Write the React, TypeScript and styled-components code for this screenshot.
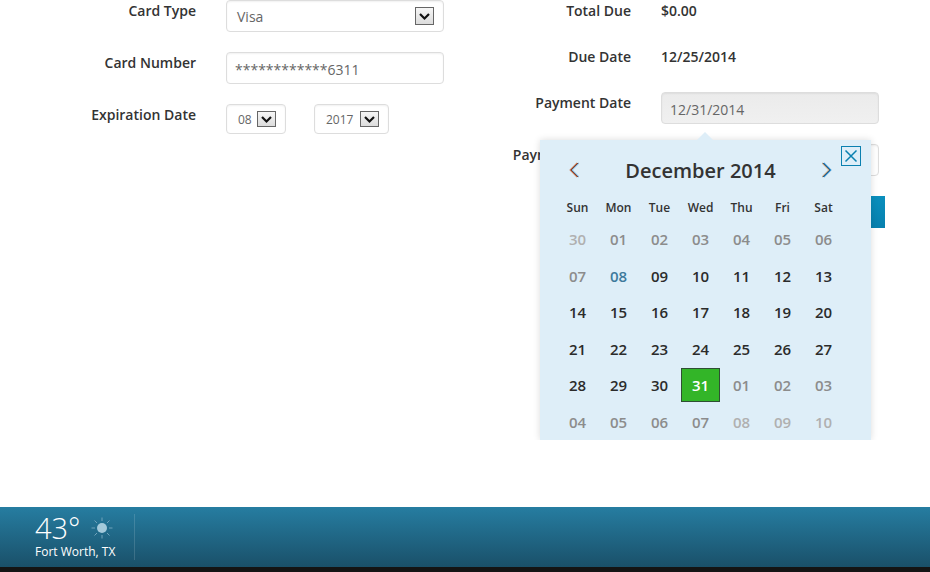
import { createGlobalStyle, styled } from "styled-components";

const GlobalStyle = createGlobalStyle`
    html, body {
        margin: 0;
        padding: 0;
        background: #fff;
        font-family: "Open Sans", "Liberation Sans", sans-serif;
    }
`;

const Page = styled.div`
    width: 930px;
    height: 572px;
    display: flex;
    flex-direction: column;
    overflow: hidden;
`;

const Main = styled.div`
    flex: 1;
    display: flex;
    position: relative;
`;

const FormColumn = styled.div<{ $width: number }>`
    width: ${(p) => p.$width}px;
    display: flex;
    flex-direction: column;
    gap: 20px;
`;

const Row = styled.div<{ $height: number }>`
    height: ${(p) => p.$height}px;
    display: flex;
    gap: 30px;
`;

const Label = styled.div<{ $width: number }>`
    width: ${(p) => p.$width}px;
    flex-shrink: 0;
    text-align: right;
    font-size: 14px;
    font-weight: 600;
    line-height: 22px;
    color: #333;
    white-space: nowrap;
`;

const Value = styled.div`
    font-size: 14px;
    font-weight: 600;
    line-height: 22px;
    color: #333;
`;

const Field = styled.div<{ $width: number; $disabled?: boolean }>`
    width: ${(p) => p.$width}px;
    height: 100%;
    box-sizing: border-box;
    display: flex;
    align-items: center;
    padding: 2px 8px 0;
    border: 1px solid #ddd;
    border-radius: 4px;
    background: ${(p) => (p.$disabled ? "linear-gradient(#ebebeb, #f0f0f0)" : "#fff")};
    box-shadow: inset 0 1px 2px rgba(0, 0, 0, 0.06);
    font-size: 14px;
    color: #666;
`;

const SelectField = styled(Field)`
    justify-content: space-between;
    padding: 0 9px 0 10px;
`;

const SmallSelectField = styled(SelectField)`
    font-size: 12px;
    padding-left: 11px;
`;

const DateGroup = styled.div`
    display: flex;
    gap: 28px;
`;

const SelectArrow = styled.span<{ $height: number }>`
    width: 19px;
    height: ${(p) => p.$height}px;
    box-sizing: border-box;
    display: flex;
    align-items: center;
    justify-content: center;
    border: 1px solid #666;
    background: linear-gradient(#f6f6f6, #dcdcdc);
`;

const SubmitButton = styled.div`
    width: 224px;
    height: 32px;
    background: linear-gradient(#0a8fbd, #0780ae);
`;

const Popup = styled.div`
    position: absolute;
    left: 540px;
    top: 140px;
    width: 331px;
    height: 300px;
    box-sizing: border-box;
    padding: 15px 18px 0 17px;
    background: #deeef8;
    box-shadow: 0 0 7px rgba(0, 0, 0, 0.14);
    clip-path: inset(-12px -12px 0 -12px);

    &::before {
        content: "";
        position: absolute;
        left: 157px;
        top: -8px;
        border-left: 8px solid transparent;
        border-right: 8px solid transparent;
        border-bottom: 8px solid #deeef8;
    }
`;

const CloseButton = styled.div`
    position: absolute;
    right: 10px;
    top: 6px;
    width: 20px;
    height: 20px;
    box-sizing: border-box;
    border: 1px solid #0a80b0;
    display: flex;
    align-items: center;
    justify-content: center;
`;

const PopupHeader = styled.div`
    width: 287px;
    height: 30px;
    box-sizing: border-box;
    display: flex;
    align-items: center;
    justify-content: space-between;
    padding: 0 12px;
`;

const MonthTitle = styled.div`
    font-size: 20px;
    font-weight: 600;
    color: #333;
`;

const WeekRow = styled.div`
    display: grid;
    grid-template-columns: repeat(7, 41px);
    margin-top: 13px;
    height: 20px;
`;

const WeekDay = styled.div`
    text-align: center;
    font-size: 12px;
    font-weight: 600;
    line-height: 20px;
    color: #333;
`;

const DayGrid = styled.div`
    display: grid;
    grid-template-columns: repeat(7, 41px);
    grid-auto-rows: 36.5px;
    margin-top: 3px;
`;

const Day = styled.div<{ $tone: string; $selected?: boolean }>`
    display: flex;
    align-items: center;
    justify-content: center;
    box-sizing: border-box;
    font-size: 15px;
    font-weight: 560;
    color: ${(p) => p.$tone};
    ${(p) =>
        p.$selected &&
        `
        background: #33b528;
        border: 1px solid #2f4f33;
        margin: 1px 1px 2px 1px;
    `}
`;

const Footer = styled.div`
    height: 65px;
    box-sizing: border-box;
    border-bottom: 5px solid #141414;
    background: linear-gradient(#267da1, #1a5069);
    display: flex;
    align-items: center;
    padding-left: 35px;
`;

const Weather = styled.div`
    height: 46px;
    padding-right: 19px;
    border-right: 1px solid rgba(255, 255, 255, 0.14);
    color: #fff;
`;

const TempRow = styled.div`
    display: flex;
    align-items: center;
    gap: 10px;
    height: 27px;
`;

const Temp = styled.div`
    font-family: "Open Sans", sans-serif;
    font-size: 29px;
    font-weight: 300;
    line-height: 27px;
`;

const City = styled.div`
    font-size: 12px;
    line-height: 18px;
    margin-top: 2px;
`;

const LIGHT = "#b0b0b0";
const MUTED = "#8c8c8c";
const DARK = "#2b2b2b";

type DayCell = { label: string; tone: string; selected?: boolean };

const cell = (label: string, tone: string = DARK): DayCell => ({ label, tone });

const days: DayCell[] = [
    cell("30", LIGHT),
    ...["01", "02", "03", "04", "05", "06", "07"].map((d) => cell(d, MUTED)),
    cell("08", "#3d7a9c"),
    ...["09", "10", "11", "12", "13", "14", "15", "16", "17", "18", "19", "20", "21", "22", "23", "24", "25", "26", "27", "28", "29", "30"].map((d) => cell(d)),
    { label: "31", tone: "#fff", selected: true },
    ...["01", "02", "03", "04", "05", "06", "07"].map((d) => cell(d, MUTED)),
    ...["08", "09", "10"].map((d) => cell(d, LIGHT)),
];

const weekDays = ["Sun", "Mon", "Tue", "Wed", "Thu", "Fri", "Sat"];

function Arrow({ height = 16 }: { height?: number }) {
    return (
        <SelectArrow $height={height}>
            <svg width="13" height="9" viewBox="0 0 13 9">
                <path d="M2 2 L6.5 6.5 L11 2" fill="none" stroke="#111" strokeWidth="2.2" />
            </svg>
        </SelectArrow>
    );
}

function NavChevron({ left }: { left?: boolean }) {
    const d = left ? "M9 1 L2 8 L9 15" : "M1 1 L8 8 L1 15";
    return (
        <svg width="10" height="16" viewBox="0 0 10 16">
            <path d={d} fill="none" stroke={left ? "#c9764a" : "#c2a07a"} strokeWidth="1.2" transform="translate(-0.8 0)" />
            <path d={d} fill="none" stroke={left ? "#7fb4d8" : "#2f8fd0"} strokeWidth="1.2" transform="translate(0.8 0)" />
            <path d={d} fill="none" stroke={left ? "#7a3f3c" : "#2f5c86"} strokeWidth="1" />
        </svg>
    );
}

function SunIcon() {
    return (
        <svg width="22" height="22" viewBox="0 0 22 22">
            <circle cx="11" cy="11" r="5" fill="#a4cadb" />
            <path
                d="M11 0.5 V4 M11 18 V21.5 M0.5 11 H4 M18 11 H21.5 M3.5 3.5 L6 6 M16 16 L18.5 18.5 M18.5 3.5 L16 6 M6 16 L3.5 18.5"
                stroke="#6fa3bb"
                strokeWidth="1"
            />
        </svg>
    );
}

export default function App() {
    return (
        <Page>
            <GlobalStyle />
            <Main>
                <FormColumn $width={470}>
                    <Row $height={32}>
                        <Label $width={196}>Card Type</Label>
                        <SelectField $width={218}>
                            Visa
                            <Arrow height={18} />
                        </SelectField>
                    </Row>
                    <Row $height={32}>
                        <Label $width={196}>Card Number</Label>
                        <Field $width={218}>************6311</Field>
                    </Row>
                    <Row $height={30}>
                        <Label $width={196}>Expiration Date</Label>
                        <DateGroup>
                            <SmallSelectField $width={60}>
                                08
                                <Arrow />
                            </SmallSelectField>
                            <SmallSelectField $width={75}>
                                2017
                                <Arrow />
                            </SmallSelectField>
                        </DateGroup>
                    </Row>
                </FormColumn>
                <FormColumn $width={460}>
                    <Row $height={26}>
                        <Label $width={161}>Total Due</Label>
                        <Value>$0.00</Value>
                    </Row>
                    <Row $height={26}>
                        <Label $width={161}>Due Date</Label>
                        <Value>12/25/2014</Value>
                    </Row>
                    <Row $height={32}>
                        <Label $width={161}>Payment Date</Label>
                        <Field $width={218} $disabled>12/31/2014</Field>
                    </Row>
                    <Row $height={32}>
                        <Label $width={161}>Payment Amount</Label>
                        <Field $width={218} />
                    </Row>
                    <Row $height={32}>
                        <Label $width={161} />
                        <SubmitButton />
                    </Row>
                </FormColumn>
                <Popup>
                    <CloseButton>
                        <svg width="14" height="14" viewBox="0 0 14 14">
                            <path d="M1.5 1.5 L12.5 12.5 M12.5 1.5 L1.5 12.5" stroke="#0a80b0" strokeWidth="1.5" />
                        </svg>
                    </CloseButton>
                    <PopupHeader>
                        <NavChevron left />
                        <MonthTitle>December 2014</MonthTitle>
                        <NavChevron />
                    </PopupHeader>
                    <WeekRow>
                        {weekDays.map((d) => (
                            <WeekDay key={d}>{d}</WeekDay>
                        ))}
                    </WeekRow>
                    <DayGrid>
                        {days.map((d, i) => (
                            <Day key={i} $tone={d.tone} $selected={d.selected}>
                                {d.label}
                            </Day>
                        ))}
                    </DayGrid>
                </Popup>
            </Main>
            <Footer>
                <Weather>
                    <TempRow>
                        <Temp>43°</Temp>
                        <SunIcon />
                    </TempRow>
                    <City>Fort Worth, TX</City>
                </Weather>
            </Footer>
        </Page>
    );
}
